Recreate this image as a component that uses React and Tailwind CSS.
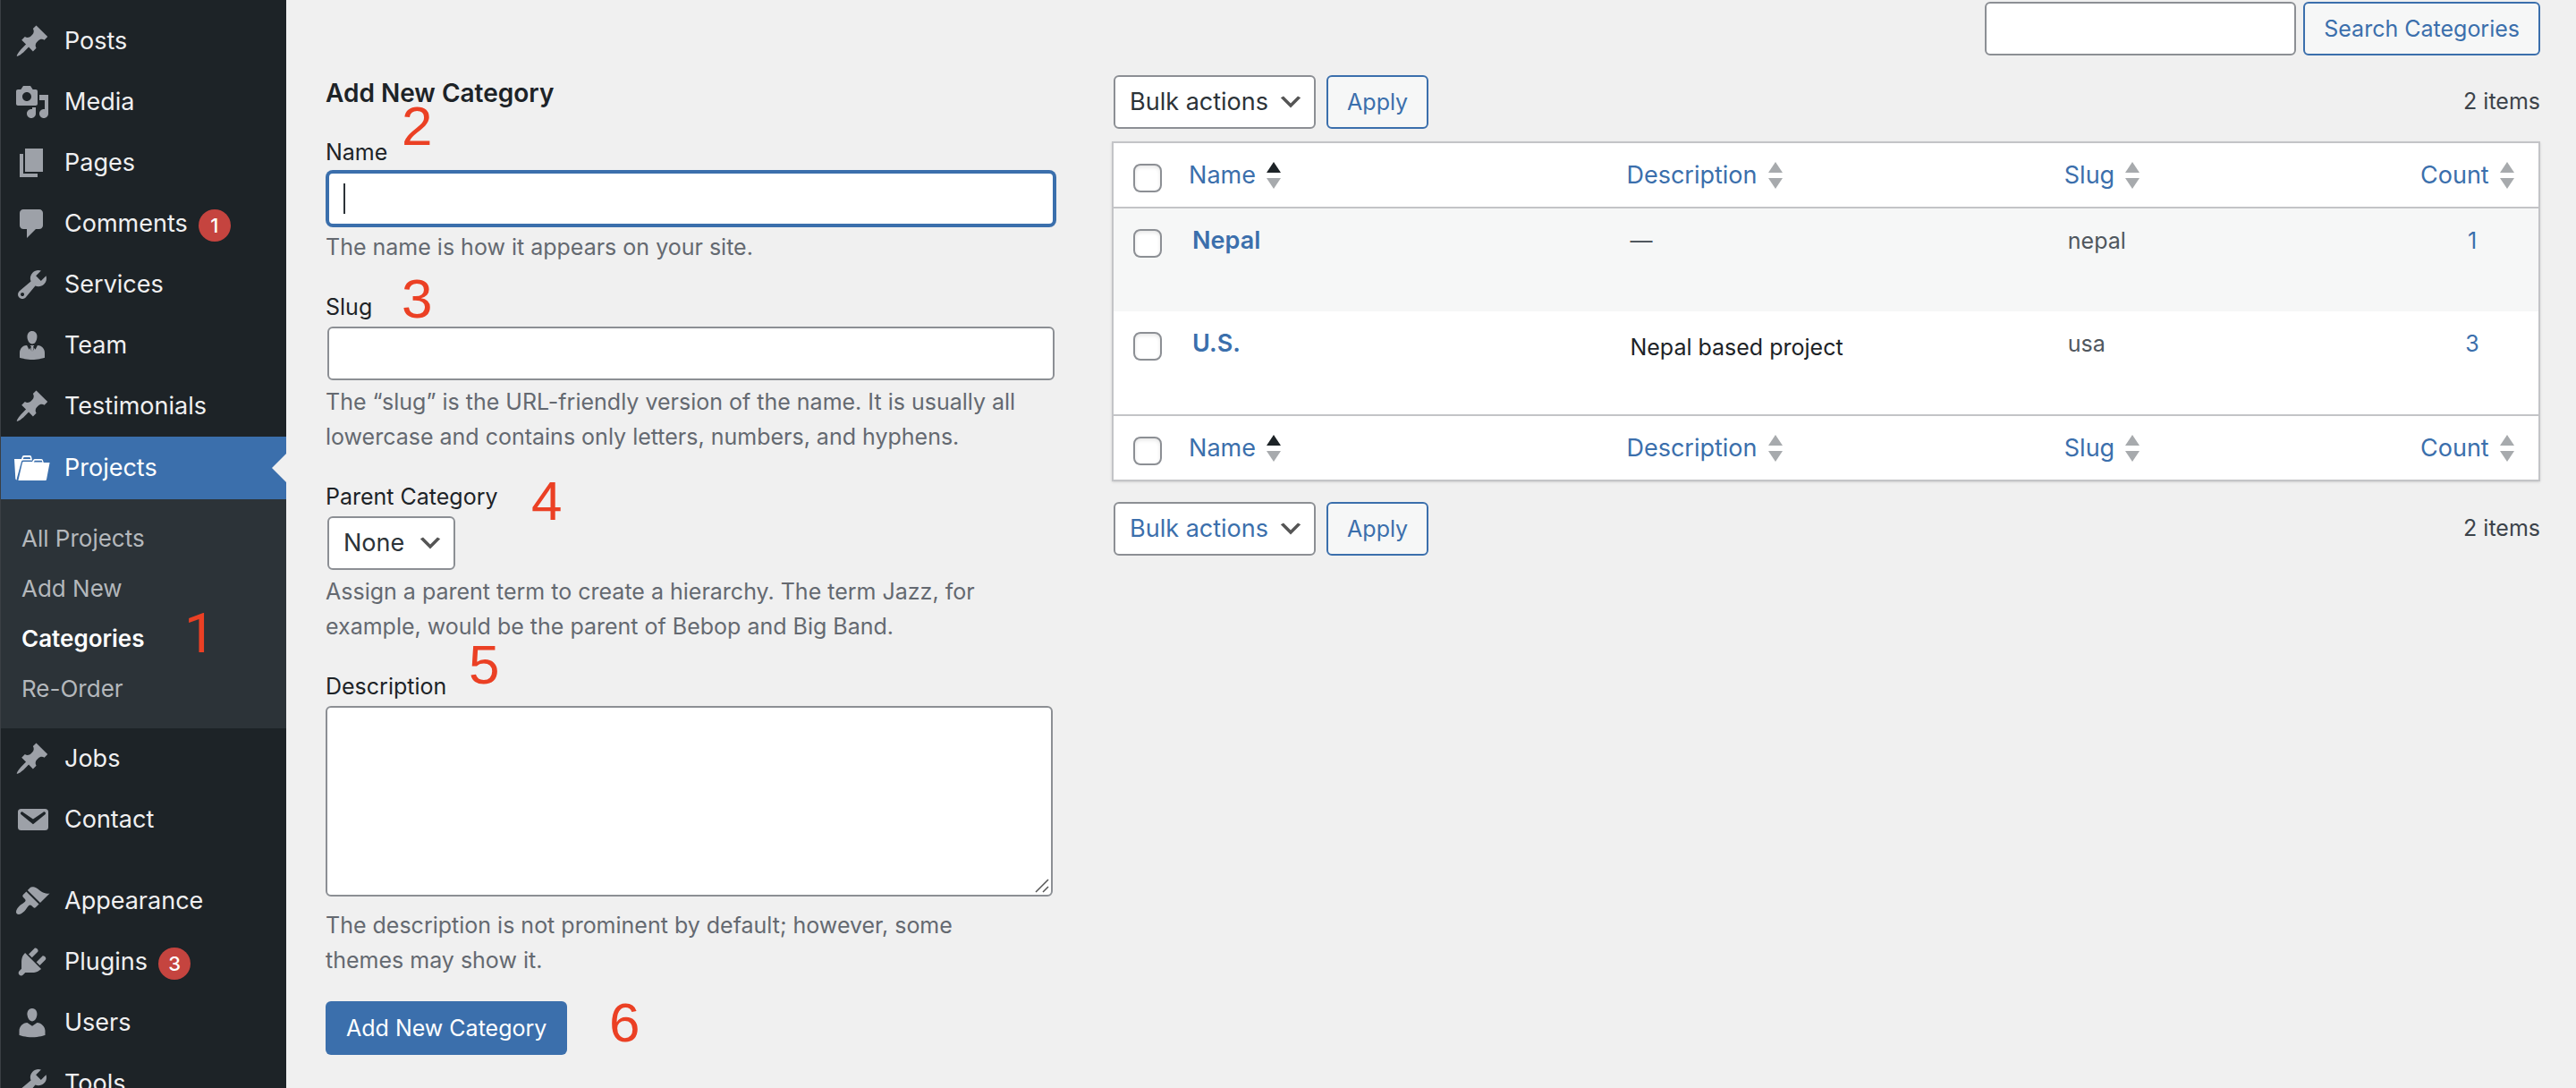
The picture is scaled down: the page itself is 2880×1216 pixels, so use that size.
import React from "react";
import clsx from "clsx";

const ICONS = {
  pin: "M10.44 3.02l1.82-1.82 6.36 6.35-1.83 1.82c-1.05-.68-2.48-.57-3.41.36l-.75.75c-.92.93-1.04 2.35-.35 3.41l-1.83 1.82-2.41-2.41-2.8 2.79c-.42.42-3.38 2.71-3.8 2.29s1.86-3.39 2.28-3.81l2.79-2.79L4.1 9.36l1.83-1.82c1.05.69 2.48.57 3.4-.36l.75-.75c.93-.92 1.05-2.35.36-3.41z",
  media: "M13 11V4c0-.55-.45-1-1-1h-1.67L9 1H5L3.67 3H2c-.55 0-1 .45-1 1v7c0 .55.45 1 1 1h10c.55 0 1-.45 1-1zM7 4.5c1.38 0 2.5 1.12 2.5 2.5S8.38 9.5 7 9.5 4.5 8.38 4.5 7 5.62 4.5 7 4.5zM14 6h5v10.5c0 1.38-1.12 2.5-2.5 2.5S14 17.88 14 16.5s1.12-2.5 2.5-2.5c.17 0 .34.02.5.05V9h-3V6zm-4 8.05V13h2v3.5c0 1.38-1.12 2.5-2.5 2.5S7 17.88 7 16.5 8.12 14 9.5 14c.17 0 .34.02.5.05z",
  page: "M6 15V2h10v13H6zm-1 1h8v2H3V5h2v11z",
  comment: "M5 2h9c1.1 0 2 .9 2 2v7c0 1.1-.9 2-2 2h-2l-5 5v-5H5c-1.1 0-2-.9-2-2V4c0-1.1.9-2 2-2z",
  wrench: "M16.68 9.77c-1.34 1.34-3.3 1.67-4.95.99l-5.41 6.52c-.99.99-2.59.99-3.58 0s-.99-2.59 0-3.57l6.52-5.42c-.68-1.65-.35-3.61.99-4.95 1.28-1.28 3.12-1.62 4.72-1.06l-2.89 2.89 2.82 2.82 2.86-2.87c.53 1.58.18 3.39-1.08 4.65zM3.81 16.21c.4.39 1.04.39 1.43 0 .4-.4.4-1.04 0-1.43-.39-.4-1.03-.4-1.43 0-.39.39-.39 1.03 0 1.43z",
  businessman: "M7.3 6l-.03-.19c-.04-.37-.05-.73-.03-1.08.02-.36.1-.71.25-1.04.14-.32.31-.61.52-.86s.49-.46.83-.6c.34-.15.72-.23 1.13-.23.69 0 1.26.2 1.71.59s.76.87.91 1.44.18 1.16.09 1.78l-.03.19c-.01.09-.05.25-.11.48-.05.24-.12.47-.2.69-.08.21-.19.45-.34.72-.14.27-.3.49-.47.69-.18.19-.4.34-.67.48-.27.13-.55.19-.86.19s-.59-.06-.87-.19c-.26-.13-.49-.29-.67-.5-.18-.2-.34-.42-.49-.66-.15-.25-.26-.49-.34-.73-.09-.25-.16-.47-.21-.67-.06-.21-.1-.37-.12-.5zM16.5 12.24c.41.7.5 1.41.5 2.14v2.49c0 .03-.12.08-.29.13-.18.04-.42.13-.97.27-.55.12-1.1.24-1.65.34s-1.19.19-1.95.27c-.75.08-1.46.12-2.13.12-.68 0-1.39-.04-2.14-.12-.75-.07-1.4-.17-1.98-.27-.58-.11-1.08-.23-1.56-.34-.49-.11-.8-.21-1.06-.29L3 16.87v-2.49c0-.75.07-1.46.46-2.15s.81-1.25 1.5-1.68c.6-.38 1.4-.5 2.1-.53l1.2 2.4.5-.9 1 1.9-.6-1.9.4-.8-.7-.4.3-.3h1.7l.3.3-.7.4.4.8-.6 1.9 1-1.9.5.9 1.2-2.4c.8.04 1.5.2 2 .53.7.45 1.21 1.02 1.63 1.72z",
  mail: "M3.87 4h13.25C18.37 4 19 4.59 19 5.79v8.42c0 1.19-.63 1.79-1.88 1.79H3.87c-1.25 0-1.88-.6-1.88-1.79V5.79c0-1.2.63-1.79 1.88-1.79zm6.62 8.6l6.74-5.53c.24-.2.43-.66.13-1.07-.29-.41-.82-.42-1.17-.17l-5.7 3.86L4.8 5.83c-.35-.25-.88-.24-1.17.17-.3.41-.11.87.13 1.07z",
  brush: "M14.48 11.06L7.41 3.99l1.5-1.5c.5-.56 2.3-.47 3.51.32 1.21.8 1.43 1.28 2.91 2.1 1.18.64 2.45 1.26 4.45.85zm-.71.71L6.7 4.7 4.93 6.47c-.39.39-.39 1.02 0 1.41l1.06 1.06c.39.39.39 1.03 0 1.42-.6.6-1.43 1.11-2.21 1.69-.35.26-.7.53-1.01.84C1.43 14.23.4 16.08 1.4 17.07c.99 1 2.84-.03 4.18-1.36.31-.31.58-.66.85-1.02.57-.78 1.08-1.61 1.69-2.21.39-.39 1.02-.39 1.41 0l1.06 1.06c.39.39 1.02.39 1.41 0z",
  plug: "M13.11 4.36L9.87 7.6 8 5.73l3.24-3.24c.35-.34 1.05-.2 1.56.32.52.51.66 1.21.31 1.55zm-8 1.77l.91-1.12 9.01 9.01-1.19.84c-.71.71-2.63 1.16-3.82 1.16H6.14L4.9 17.26c-.59.59-1.54.59-2.12 0-.59-.58-.59-1.53 0-2.12l1.24-1.24v-3.88c0-1.13.4-3.19 1.09-3.89zm7.26 3.97l3.24-3.24c.34-.35 1.04-.21 1.55.31.52.51.66 1.21.31 1.55l-3.24 3.25z",
  user: "M10 9.25c-2.27 0-2.73-3.44-2.73-3.44C7 4.02 7.82 2 9.97 2c2.16 0 2.98 2.02 2.71 3.81 0 0-.41 3.44-2.68 3.44zm0 2.57L12.72 10c2.39 0 4.52 2.33 4.52 4.53v2.49s-3.65 1.13-7.24 1.13c-3.65 0-7.24-1.13-7.24-1.13v-2.49c0-2.25 1.94-4.48 4.47-4.48z",
};

function Icon({ name }) {
  return (
    <svg aria-hidden="true" viewBox="0 0 20 20" className="size-10 shrink-0 fill-[#9da1a8]">
      <path d={ICONS[name]} />
    </svg>
  );
}

function FolderIcon() {
  return (
    <svg aria-hidden="true" viewBox="0 0 40 40" className="size-10 shrink-0 overflow-visible fill-white">
      <path fillRule="evenodd" d="M0 10H8L9 7Q9.5 6 11 6H17Q18.5 6 19 7L20 11.5H9.8Q8.4 11.5 8 12.8L3 31L2.6 33.5Q1.5 33 1.3 32ZM9.8 10H18.2L17.6 8H10.5Z" />
      <path fillRule="evenodd" d="M9 14Q9.4 13 10.4 13H20L21.2 11Q22 10 23 10H30Q31.4 10 31.8 11L32.8 14H39.6L36 33Q35.8 34 34.8 34H4.4ZM21.8 13.6H31.4L30.8 11.8H22.8Z" />
    </svg>
  );
}

function MenuItem({ icon, label, badge }) {
  return (
    <li>
      <a href="#" className="flex items-center gap-4 py-[14px] pl-[15px] text-[27px] leading-10 text-[#f0f0f1]">
        <Icon name={icon} />
        <span className="flex items-center gap-3">
          {label}
          {badge && (
            <span className="mt-1 flex size-9 items-center justify-center rounded-full bg-[#c5443f] text-[22px] font-medium leading-none text-white">
              {badge}
            </span>
          )}
        </span>
      </a>
    </li>
  );
}

function Callout({ n, className }) {
  return (
    <span className={clsx("pointer-events-none absolute text-[62px] leading-none text-[#eb4024]", className)}>
      {n}
    </span>
  );
}

function Sidebar() {
  return (
    <nav aria-label="Main menu" className="w-80 shrink-0 border-l border-[#3a3f44] bg-[#1d2327] pt-3">
      <ul>
        <MenuItem icon="pin" label="Posts" />
        <MenuItem icon="media" label="Media" />
        <MenuItem icon="page" label="Pages" />
        <MenuItem icon="comment" label="Comments" badge="1" />
        <MenuItem icon="wrench" label="Services" />
        <MenuItem icon="businessman" label="Team" />
        <MenuItem icon="pin" label="Testimonials" />
        <li>
          <a
            href="#"
            aria-current="true"
            className="relative flex items-center gap-4 bg-[#3b6fac] py-[15px] pl-[15px] text-[27px] leading-10 text-white"
          >
            <FolderIcon />
            Projects
            <span className="absolute top-1/2 right-0 -translate-y-1/2 border-y-16 border-r-16 border-y-transparent border-r-[#f0f0f0]" />
          </a>
          <ul className="bg-[#2c3338] py-4 text-[26px] leading-10 text-[#b4b8bc]">
            <li><a href="#" className="block py-2 pl-[23px]">All Projects</a></li>
            <li><a href="#" className="block py-2 pl-[23px]">Add New</a></li>
            <li className="relative">
              <a href="#" className="block py-2 pl-[23px] font-semibold text-white">Categories</a>
              <Callout n="1" className="-top-[9px] left-[205px] font-['Roboto',sans-serif]" />
            </li>
            <li><a href="#" className="block py-2 pl-[23px]">Re-Order</a></li>
          </ul>
        </li>
        <MenuItem icon="pin" label="Jobs" />
        <MenuItem icon="mail" label="Contact" />
      </ul>
      <ul className="mt-[23px]">
        <MenuItem icon="brush" label="Appearance" />
        <MenuItem icon="plug" label="Plugins" badge="3" />
        <MenuItem icon="user" label="Users" />
        <MenuItem icon="wrench" label="Tools" />
      </ul>
    </nav>
  );
}

function Select({ id, label, text, className }) {
  return (
    <div className={clsx("relative ml-[2px]", className)}>
      <select
        id={id}
        aria-label={label}
        className="h-[60px] w-full appearance-none rounded-md border-2 border-[#8c8f94] bg-white pl-4 text-[27px] leading-10"
      >
        <option>{text}</option>
      </select>
      <svg
        aria-hidden="true"
        viewBox="0 0 20 20"
        className="pointer-events-none absolute top-1/2 right-3 size-8 -translate-y-1/2 fill-[#555]"
      >
        <path d="M5 6l5 5 5-5 2 1-7 7-7-7 2-1z" />
      </svg>
    </div>
  );
}

function Field({ id, label, help, callout, helpClass, children }) {
  return (
    <div className="relative">
      <label htmlFor={id} className="mb-[2px] block text-[#1d2327]">{label}</label>
      {children}
      <p className={clsx("pr-6 text-[#646970]", helpClass)}>{help}</p>
      {callout}
    </div>
  );
}

const digit = "font-['Liberation_Sans',Arial,sans-serif]";

function AddForm() {
  return (
    <form className="w-[33%] shrink-0 pt-[85px] text-[25px] leading-[39px]" onSubmit={(e) => e.preventDefault()}>
      <h2 className="mb-[27px] text-[28px] font-semibold text-[#1d2327]">Add New Category</h2>
      <div className="flex flex-col gap-7">
        <Field
          id="tag-name"
          label="Name"
          help="The name is how it appears on your site."
          helpClass="mt-[5px]"
          callout={<Callout n="2" className={clsx("-top-[41px] left-[85px]", digit)} />}
        >
          <div className="relative mx-[2px]">
            <input
              id="tag-name"
              type="text"
              className="block h-[60px] w-full rounded-md border-2 border-[#3b6fac] bg-white px-4 ring-2 ring-[#3b6fac] outline-none"
            />
            <span aria-hidden="true" className="absolute top-[13px] left-[18px] h-[34px] w-[2px] bg-[#2c3338]" />
          </div>
        </Field>
        <Field
          id="tag-slug"
          label="Slug"
          help="The “slug” is the URL-friendly version of the name. It is usually all lowercase and contains only letters, numbers, and hyphens."
          helpClass="mt-[5px]"
          callout={<Callout n="3" className={clsx("-top-[21px] left-[85px]", digit)} />}
        >
          <div className="mx-[2px]">
            <input
              id="tag-slug"
              type="text"
              className="block h-[60px] w-full rounded-md border-2 border-[#8c8f94] bg-white px-4"
            />
          </div>
        </Field>
        <Field
          id="tag-parent"
          label="Parent Category"
          help="Assign a parent term to create a hierarchy. The term Jazz, for example, would be the parent of Bebop and Big Band."
          helpClass="mt-[5px]"
          callout={<Callout n="4" className={clsx("-top-[7px] left-[230px]", digit)} />}
        >
          <Select id="tag-parent" text="None" className="w-[143px] text-[#2c3338]" />
        </Field>
        <Field
          id="tag-description"
          label="Description"
          help="The description is not prominent by default; however, some themes may show it."
          helpClass="mt-[13px]"
          callout={<Callout n="5" className={clsx("-top-[36px] left-[160px]", digit)} />}
        >
          <div className="relative mr-1">
            <textarea
              id="tag-description"
              rows={5}
              className="block h-[213px] w-full resize-none rounded-md border-2 border-[#8c8f94] bg-white px-4 py-1"
            />
            <svg
              aria-hidden="true"
              viewBox="0 0 16 16"
              className="pointer-events-none absolute right-1 bottom-1 size-4 fill-none stroke-[#555] stroke-[1.5]"
            >
              <path d="M1 15L15 1M9 15L15 9" />
            </svg>
          </div>
        </Field>
      </div>
      <div className="relative mt-[26px]">
        <button type="submit" className="rounded-md bg-[#3b6fac] px-[23px] py-[10px] leading-10 text-white">
          Add New Category
        </button>
        <Callout n="6" className={clsx("-top-[7px] left-[317px]", digit)} />
      </div>
    </form>
  );
}

const outlineButton =
  "h-[60px] rounded-md border-2 border-[#3b6fac] bg-[#f6f7f7] px-[21px] text-[25px] leading-10 text-[#3b6fac]";

function Toolbar({ place, className }) {
  return (
    <div className={clsx("flex items-center", className)}>
      <Select id={"bulk-" + place} label="Select bulk action" text="Bulk actions" className="w-[226px]" />
      <button type="button" className={clsx("ml-3", outlineButton)}>Apply</button>
      <span className="ml-auto pb-[2px] text-[25px] leading-10 text-[#3c434a]">2 items</span>
    </div>
  );
}

function Sorter({ active }) {
  return (
    <svg aria-hidden="true" viewBox="0 0 16 30" className="h-[30px] w-4 fill-[#a7aaad]">
      <path d="M8 0L16 12H0Z" className={active ? "fill-[#1d2327]" : undefined} />
      <path d="M8 30L0 18H16Z" />
    </svg>
  );
}

function Check({ label }) {
  return (
    <input
      type="checkbox"
      aria-label={label}
      className="block size-8 appearance-none rounded-lg border-2 border-[#8c8f94] bg-white shadow-[inset_0_2px_4px_rgba(0,0,0,0.1)]"
    />
  );
}

function HeadRow({ edge }) {
  const cell = clsx("border-[#c3c4c7] p-0 pt-4 pb-[15px] pl-4 text-left align-top font-normal", edge);
  return (
    <tr>
      <td className={clsx("w-[68px] border-[#c3c4c7] pt-[23px] pl-[22px] align-top", edge)}>
        <Check label="Select All" />
      </td>
      {["Name", "Description", "Slug", "Count"].map((name) => (
        <th
          key={name}
          scope="col"
          className={clsx(cell, name === "Slug" && "w-1/4", name === "Count" && "w-[148px]")}
        >
          <a href="#" className="flex items-center gap-3 text-[27px] leading-10 text-[#3b6fac]">
            {name}
            <Sorter active={name === "Name"} />
          </a>
        </th>
      ))}
    </tr>
  );
}

function BodyRow({ name, description, slug, count, striped }) {
  return (
    <tr className={clsx("h-[115px] align-top text-[25px] leading-10", striped && "bg-[#f6f7f7]")}>
      <td className="pt-[23px] pl-[22px]"><Check label={"Select " + name} /></td>
      <td className="pt-4 pl-5">
        <a href="#" className="text-[27px] font-semibold text-[#3b6fac]">{name}</a>
      </td>
      <td className="pt-4 pl-5">
        {description ? <p className="pt-1 text-[#1d2327]">{description}</p> : <span className="text-[#50575e]">—</span>}
      </td>
      <td className="pt-4 pl-5 text-[#50575e]">{slug}</td>
      <td className="pt-4 text-center"><a href="#" className="text-[#3b6fac]">{count}</a></td>
    </tr>
  );
}

function CategoryList() {
  return (
    <section aria-label="Categories" className="min-w-0 flex-1 pt-[2px]">
      <form role="search" className="flex justify-end gap-2" onSubmit={(e) => e.preventDefault()}>
        <input
          type="search"
          aria-label="Search Categories"
          className="h-[60px] w-[348px] rounded-md border-2 border-[#8c8f94] bg-white px-4 text-[25px]"
        />
        <button type="submit" className={outlineButton}>Search Categories</button>
      </form>
      <Toolbar place="top" className="mt-[22px] text-[#2c3338]" />
      <table className="mt-[14px] w-full table-fixed border-separate border-spacing-0 border-2 border-[#c3c4c7] bg-white shadow-sm">
        <thead>
          <HeadRow edge="border-b-2" />
        </thead>
        <tbody>
          <BodyRow name="Nepal" slug="nepal" count="1" striped />
          <BodyRow name="U.S." description="Nepal based project" slug="usa" count="3" />
        </tbody>
        <tfoot>
          <HeadRow edge="border-t-2" />
        </tfoot>
      </table>
      <Toolbar place="bottom" className="mt-[23px] text-[#3b6fac]" />
    </section>
  );
}

export default function App() {
  return (
    <div className="flex h-screen overflow-hidden bg-[#f0f0f0] font-['Inter',sans-serif]">
      <Sidebar />
      <main className="flex min-w-0 flex-1 gap-[62px] pr-10 pl-11">
        <AddForm />
        <CategoryList />
      </main>
    </div>
  );
}
